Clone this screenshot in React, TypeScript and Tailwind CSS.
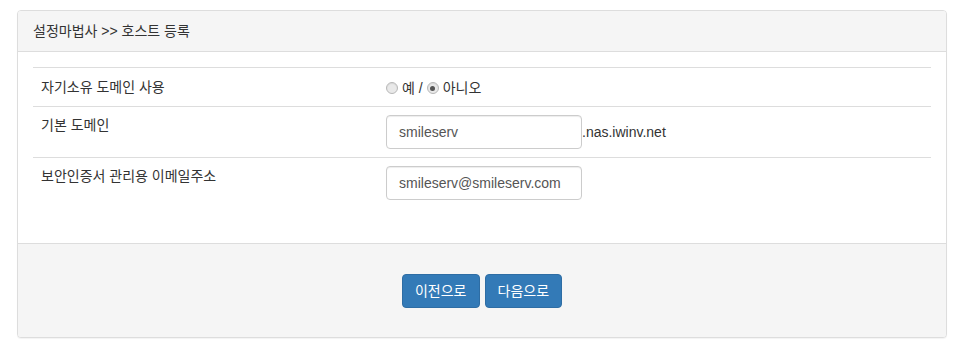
import React from "react";

function Radio({ checked }: { checked?: boolean }) {
  return (
    <span className="inline-flex w-[12px] h-[12px] rounded-full border border-[#b8b8b8] bg-[#e9e9e9] items-center justify-center shadow-[inset_0_1px_1px_rgba(0,0,0,0.08)]">
      {checked ? <span className="block w-[5px] h-[5px] rounded-full bg-[#555]" /> : null}
    </span>
  );
}

export default function App() {
  return (
    <div
      className="w-[958px] h-[347px] bg-white text-[14px] leading-[20px] text-[#333] pt-[10px] px-[17px]"
      style={{ fontFamily: '"Liberation Sans", "Noto Sans CJK KR", sans-serif' }}
    >
      <div className="w-[930px] border border-[#ddd] rounded-[4px] bg-white shadow-[0_1px_1px_rgba(0,0,0,0.05)]">
        <div className="bg-[#f5f5f5] border-b border-[#ddd] px-[15px] py-[10px] rounded-t-[3px]">
          설정마법사 &gt;&gt; 호스트 등록
        </div>
        <div className="p-[15px]">
          <div className="mb-[20px]">
            <div className="flex border-t border-[#ddd]">
              <div className="w-[345px] p-[8px] leading-[22px]">자기소유 도메인 사용</div>
              <div className="flex-1 p-[8px] leading-[22px] flex items-center gap-[4px] pt-[9px] pb-[7px]">
                <Radio />
                <span>예 /</span>
                <Radio checked />
                <span>아니오</span>
              </div>
            </div>
            <div className="flex border-t border-[#ddd]">
              <div className="w-[345px] p-[8px]">기본 도메인</div>
              <div className="flex-1 p-[8px] flex items-center">
                <div className="w-[196px] h-[34px] border border-[#ccc] rounded-[4px] px-[12px] flex items-center shadow-[inset_0_1px_1px_rgba(0,0,0,0.075)] text-[#555]">
                  smileserv
                </div>
                <span>.nas.iwinv.net</span>
              </div>
            </div>
            <div className="flex border-t border-[#ddd]">
              <div className="w-[345px] p-[8px]">보안인증서 관리용 이메일주소</div>
              <div className="flex-1 p-[8px] flex items-center">
                <div className="w-[196px] h-[34px] border border-[#ccc] rounded-[4px] px-[12px] flex items-center shadow-[inset_0_1px_1px_rgba(0,0,0,0.075)] text-[#555]">
                  smileserv@smileserv.com
                </div>
              </div>
            </div>
          </div>
        </div>
        <div className="bg-[#f5f5f5] border-t border-[#ddd] h-[94px] flex items-center justify-center gap-[5px] rounded-b-[3px]">
          <button className="h-[34px] px-[12px] rounded-[4px] bg-[#337ab7] border border-[#2e6da4] text-white">
            이전으로
          </button>
          <button className="h-[34px] px-[12px] rounded-[4px] bg-[#337ab7] border border-[#2e6da4] text-white">
            다음으로
          </button>
        </div>
      </div>
    </div>
  );
}
